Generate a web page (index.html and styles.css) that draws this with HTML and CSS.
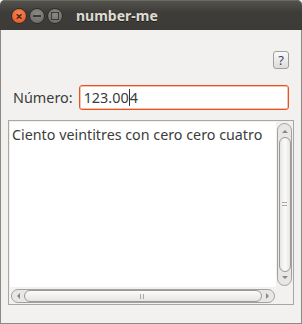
FILE: index.html
```html
<!DOCTYPE html>
<html>
<head>
    <title>number-me</title>
    <link rel="stylesheet" href="styles.css">
</head>
<body>
    <div class="window">
        <div class="titlebar">
            <div class="controls">
                <span class="wbtn close">&#215;</span>
                <span class="wbtn minimize"><i class="bar"></i></span>
                <span class="wbtn maximize"><i class="box"></i></span>
            </div>
            <span class="title">number-me</span>
        </div>
        <div class="content">
            <div class="toolbar">
                <button class="help">?</button>
            </div>
            <div class="number-row">
                <label class="label">Número:</label>
                <div class="entry">123.00<span class="caret"></span>4</div>
            </div>
            <div class="frame">
                <div class="view">Ciento veintitres con cero cero cuatro</div>
                <div class="vscroll">
                    <span class="arrow up"></span>
                    <div class="vthumb"><span class="grip"></span></div>
                    <span class="arrow down"></span>
                </div>
                <div class="hscroll">
                    <span class="arrow left"></span>
                    <div class="hthumb"><span class="grip"></span></div>
                    <span class="arrow right"></span>
                </div>
                <div class="corner"></div>
            </div>
        </div>
    </div>
</body>
</html>
```

FILE: styles.css
```css
body {
    margin: 0;
    background: #f2f1f0;
    font-family: "Noto Sans", "DejaVu Sans", sans-serif;
}
.window {
    width: 302px;
    height: 324px;
    box-sizing: border-box;
    display: flex;
    flex-direction: column;
    background: #f2f1f0;
}
.titlebar {
    height: 30px;
    flex: none;
    display: flex;
    align-items: center;
    background: linear-gradient(#55544f, #3e3d39 40%, #3c3b37);
    border-radius: 5px 5px 0 0;
    box-shadow: inset 0 1px 0 #6a6964;
}
.controls {
    display: flex;
    gap: 2px;
    padding-left: 11px;
    margin-top: 2px;
}
.wbtn {
    width: 16px;
    height: 16px;
    border-radius: 50%;
    box-sizing: border-box;
    display: flex;
    align-items: center;
    justify-content: center;
    border: 1px solid #2e2d2a;
    background: radial-gradient(circle at 50% 35%, #8d8b85, #65635e);
    color: #3c3b37;
}
.close {
    background: radial-gradient(circle at 50% 35%, #f7875a, #e0501d);
    font-size: 13px;
    font-weight: bold;
    line-height: 1;
    color: #4a2616;
}
.bar {
    width: 8px;
    height: 2px;
    background: #3c3b37;
}
.box {
    width: 6px;
    height: 6px;
    border: 1px solid #3c3b37;
}
.title {
    margin-left: 13px;
    margin-top: 1px;
    color: #dfdbd2;
    font-weight: bold;
    font-size: 14px;
    text-shadow: 0 1px 0 #1e1e1c;
}
.content {
    flex: 1;
    display: flex;
    flex-direction: column;
    border: 1px solid #8c8a86;
    border-top: none;
    padding: 0 7px 18px 7px;
    min-height: 0;
}
.toolbar {
    display: flex;
    justify-content: flex-end;
    padding: 21px 5px 0 0;
}
.help {
    width: 16px;
    height: 18px;
    padding: 0;
    border: 1px solid #a09e9a;
    border-radius: 3px;
    background: linear-gradient(#fafafa, #dedcda);
    font-family: inherit;
    font-size: 13px;
    line-height: 16px;
    color: #34466a;
}
.number-row {
    display: flex;
    align-items: center;
    gap: 6px;
    margin-top: 16px;
    padding-left: 5px;
    padding-right: 5px;
}
.label {
    color: #3c3c3c;
    font-size: 14.4px;
}
.entry {
    flex: 1;
    height: 25px;
    box-sizing: border-box;
    border: 1px solid #e95420;
    border-radius: 3px;
    background: #fff;
    box-shadow: inset 0 0 0 1px #f7c2ad;
    padding-left: 4px;
    font-size: 14.4px;
    line-height: 23px;
    color: #3c3c3c;
}
.caret {
    display: inline-block;
    width: 1px;
    height: 17px;
    background: #333;
    vertical-align: -3px;
}
.frame {
    margin-top: 10px;
    flex: 1;
    min-height: 0;
    display: grid;
    grid-template-columns: 1fr 16px;
    grid-template-rows: 1fr 16px;
    border: 1px solid #a9a7a3;
    padding: 1px;
    background: #f2f1f0;
}
.view {
    background: #fff;
    padding: 4px 2px;
    font-size: 14.3px;
    color: #3c3c3c;
    white-space: nowrap;
    overflow: hidden;
    line-height: 18px;
}
.vscroll {
    margin: 1px 0 1px 1px;
    border: 1px solid #a3a19d;
    border-radius: 8px;
    background: #e8e7e5;
    display: flex;
    flex-direction: column;
    align-items: center;
}
.hscroll {
    margin: 2px 1px 0 1px;
    border: 1px solid #a3a19d;
    border-radius: 8px;
    background: #e8e7e5;
    display: flex;
    align-items: center;
}
.arrow {
    flex: none;
    width: 0;
    height: 0;
    border: 3px solid transparent;
}
.up {
    border-bottom-color: #8a8884;
    margin: 3px 0 4px;
}
.down {
    border-top-color: #8a8884;
    margin: 4px 0 3px;
}
.left {
    border-right-color: #8a8884;
    margin: 0 4px 0 2px;
}
.right {
    border-left-color: #8a8884;
    margin: 0 2px 0 4px;
}
.vthumb {
    flex: 1;
    width: 12px;
    box-sizing: border-box;
    border: 1px solid #9c9a96;
    border-radius: 7px;
    background: linear-gradient(90deg, #e6e5e3, #fbfbfb 50%, #e6e5e3);
    display: flex;
    align-items: center;
    justify-content: center;
}
.hthumb {
    flex: 1;
    height: 12px;
    box-sizing: border-box;
    border: 1px solid #9c9a96;
    border-radius: 7px;
    background: linear-gradient(#fbfbfb, #e6e5e3);
    display: flex;
    align-items: center;
    justify-content: center;
}
.vthumb .grip {
    width: 5px;
    height: 6px;
    background: repeating-linear-gradient(#a8a6a2 0 1px, transparent 1px 3px);
}
.hthumb .grip {
    width: 6px;
    height: 5px;
    background: repeating-linear-gradient(90deg, #a8a6a2 0 1px, transparent 1px 3px);
}
.corner {
    background: #f2f1f0;
}
```
